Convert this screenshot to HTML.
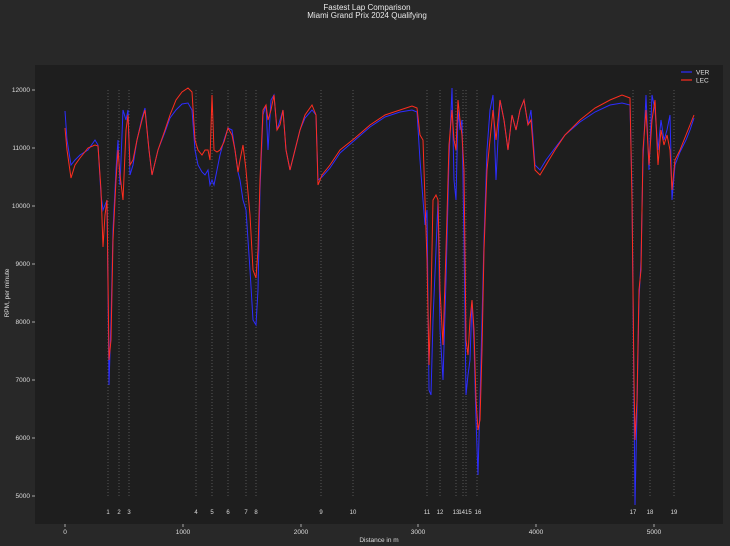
<!DOCTYPE html>
<html><head><style>
html,body{margin:0;padding:0;background:#282828;}
svg{display:block;font-family:"Liberation Sans","DejaVu Sans",sans-serif;}
</style></head><body>
<svg width="730" height="546" viewBox="0 0 730 546" xmlns="http://www.w3.org/2000/svg">
<rect x="0" y="0" width="730" height="546" fill="#282828"/>
<text x="367" y="10" fill="#e8e8e8" font-size="8" text-anchor="middle">Fastest Lap Comparison</text>
<text x="367" y="18" fill="#e8e8e8" font-size="8" text-anchor="middle">Miami Grand Prix 2024 Qualifying</text>
<rect x="35" y="65" width="688" height="459" fill="#1e1e1e"/>
<g stroke="#bbbbbb" stroke-width="0.6" stroke-dasharray="1,2" opacity="0.6">
<line x1="108" y1="90" x2="108" y2="496"/><line x1="119" y1="90" x2="119" y2="496"/><line x1="129" y1="90" x2="129" y2="496"/>
<line x1="196" y1="90" x2="196" y2="496"/><line x1="212" y1="90" x2="212" y2="496"/><line x1="228" y1="90" x2="228" y2="496"/>
<line x1="246" y1="90" x2="246" y2="496"/><line x1="256" y1="90" x2="256" y2="496"/><line x1="321" y1="90" x2="321" y2="496"/>
<line x1="353" y1="90" x2="353" y2="496"/><line x1="427" y1="90" x2="427" y2="496"/><line x1="440" y1="90" x2="440" y2="496"/>
<line x1="456" y1="90" x2="456" y2="496"/><line x1="463" y1="90" x2="463" y2="496"/><line x1="466" y1="90" x2="466" y2="496"/>
<line x1="477" y1="90" x2="477" y2="496"/><line x1="633" y1="90" x2="633" y2="496"/><line x1="650" y1="90" x2="650" y2="496"/>
<line x1="674" y1="90" x2="674" y2="496"/>
</g>
<g fill="#dddddd" font-size="6" text-anchor="middle">
<text x="108" y="514">1</text><text x="119" y="514">2</text><text x="129" y="514">3</text><text x="196" y="514">4</text>
<text x="212" y="514">5</text><text x="228" y="514">6</text><text x="246" y="514">7</text><text x="256" y="514">8</text>
<text x="321" y="514">9</text><text x="353" y="514">10</text><text x="427" y="514">11</text><text x="440" y="514">12</text>
<text x="456" y="514">13</text><text x="465" y="514">1415</text><text x="478" y="514">16</text><text x="633" y="514">17</text>
<text x="650" y="514">18</text><text x="674" y="514">19</text>
</g>
<polyline fill="none" stroke="#2d2dff" stroke-width="1" points="65,111 67,140 71,165 75,160 80,155 88,150 95,140 98,145 101,195 103,210 105,205 107,200 109,385 111,320 113,230 116,170 118,140 120,185 123,110 126,120 128,110 130,175 133,165 137,140 142,118 145,108 149,150 152,175 158,150 165,132 170,118 176,110 182,104 188,103 192,110 195,150 198,165 202,172 205,175 208,170 210,185 212,180 214,185 217,170 220,155 224,140 228,128 232,130 235,150 238,172 240,180 243,200 246,210 250,270 253,320 256,325 258,290 260,190 263,115 266,105 268,150 271,100 274,95 277,130 280,120 283,110 286,150 290,170 295,150 300,130 305,118 312,110 316,115 318,180 322,177 330,168 340,153 355,140 370,127 385,117 400,112 412,110 417,112 420,160 423,200 425,225 427,210 429,390 431,395 433,320 436,250 438,200 440,330 443,380 446,280 449,160 452,88 454,180 456,200 458,110 460,130 462,120 464,240 466,395 468,375 470,360 472,300 474,345 476,420 478,475 480,400 482,320 484,240 487,150 490,110 493,95 496,180 500,100 504,120 508,150 512,115 516,130 520,110 524,100 528,125 531,110 535,165 540,170 546,160 555,148 565,135 580,122 595,112 610,105 622,103 630,105 632,190 634,400 635,505 637,410 639,300 641,260 643,160 646,95 649,170 652,95 655,110 658,150 661,120 664,140 667,130 670,115 672,200 675,165 680,152 686,140 690,130 694,118"/>
<polyline fill="none" stroke="#ff2d1e" stroke-width="1" points="65,128 67,150 71,178 75,165 80,158 88,148 95,145 98,146 101,190 103,247 105,215 107,200 109,360 111,340 113,240 116,180 118,150 120,175 123,200 126,130 128,115 130,165 133,160 137,140 142,120 145,110 149,150 152,175 158,150 165,130 170,115 176,100 182,92 188,88 192,92 195,140 198,150 202,155 205,150 208,150 210,160 212,95 214,150 217,152 220,150 224,142 228,128 232,135 235,150 238,172 240,160 243,145 246,170 250,215 253,270 256,278 258,250 260,180 263,110 266,105 268,120 271,110 274,95 277,130 280,125 283,110 286,150 290,170 295,150 300,130 305,115 312,105 316,115 318,185 322,175 330,165 340,150 355,138 370,125 385,115 400,110 412,106 417,108 420,135 423,140 425,200 427,260 429,365 431,300 433,200 436,195 438,200 440,290 443,345 446,250 449,145 452,110 454,140 456,150 458,100 460,120 462,135 464,170 466,340 468,355 470,320 472,300 474,330 476,400 478,430 480,420 482,350 484,250 487,170 490,140 493,110 496,140 500,100 504,120 508,150 512,115 516,130 520,110 524,100 528,125 531,120 535,170 540,175 546,165 555,150 565,135 580,120 595,108 610,100 622,95 630,98 632,200 634,380 635,440 637,400 639,290 641,270 643,150 646,110 649,165 652,120 655,100 658,165 661,130 664,145 667,135 670,150 672,190 675,160 680,150 686,135 690,125 694,115"/>
<line x1="681" y1="72" x2="692" y2="72" stroke="#2d2dff" stroke-width="1.2"/>
<line x1="681" y1="80" x2="692" y2="80" stroke="#ff2d1e" stroke-width="1.2"/>
<g fill="#e0e0e0" font-size="6.5"><text x="696" y="74.5">VER</text><text x="696" y="82.5">LEC</text></g>
<g fill="#dddddd" font-size="6.5" text-anchor="end">
<text x="30" y="92">12000</text><text x="30" y="150">11000</text><text x="30" y="208">10000</text><text x="30" y="266">9000</text>
<text x="30" y="324">8000</text><text x="30" y="382">7000</text><text x="30" y="440">6000</text><text x="30" y="498">5000</text>
</g>
<g stroke="#dddddd" stroke-width="0.7">
<line x1="32" y1="90" x2="35" y2="90"/><line x1="32" y1="148" x2="35" y2="148"/><line x1="32" y1="206" x2="35" y2="206"/><line x1="32" y1="264" x2="35" y2="264"/>
<line x1="32" y1="322" x2="35" y2="322"/><line x1="32" y1="380" x2="35" y2="380"/><line x1="32" y1="438" x2="35" y2="438"/><line x1="32" y1="496" x2="35" y2="496"/>
<line x1="65" y1="524" x2="65" y2="527"/><line x1="183" y1="524" x2="183" y2="527"/><line x1="301" y1="524" x2="301" y2="527"/>
<line x1="418" y1="524" x2="418" y2="527"/><line x1="536" y1="524" x2="536" y2="527"/><line x1="654" y1="524" x2="654" y2="527"/>
</g>
<g fill="#dddddd" font-size="6.5" text-anchor="middle">
<text x="65" y="534">0</text><text x="183" y="534">1000</text><text x="301" y="534">2000</text>
<text x="418" y="534">3000</text><text x="536" y="534">4000</text><text x="654" y="534">5000</text>
<text x="379" y="542">Distance in m</text>
<text transform="translate(9,293) rotate(-90)">RPM, per minute</text>
</g>
</svg>
</body></html>
